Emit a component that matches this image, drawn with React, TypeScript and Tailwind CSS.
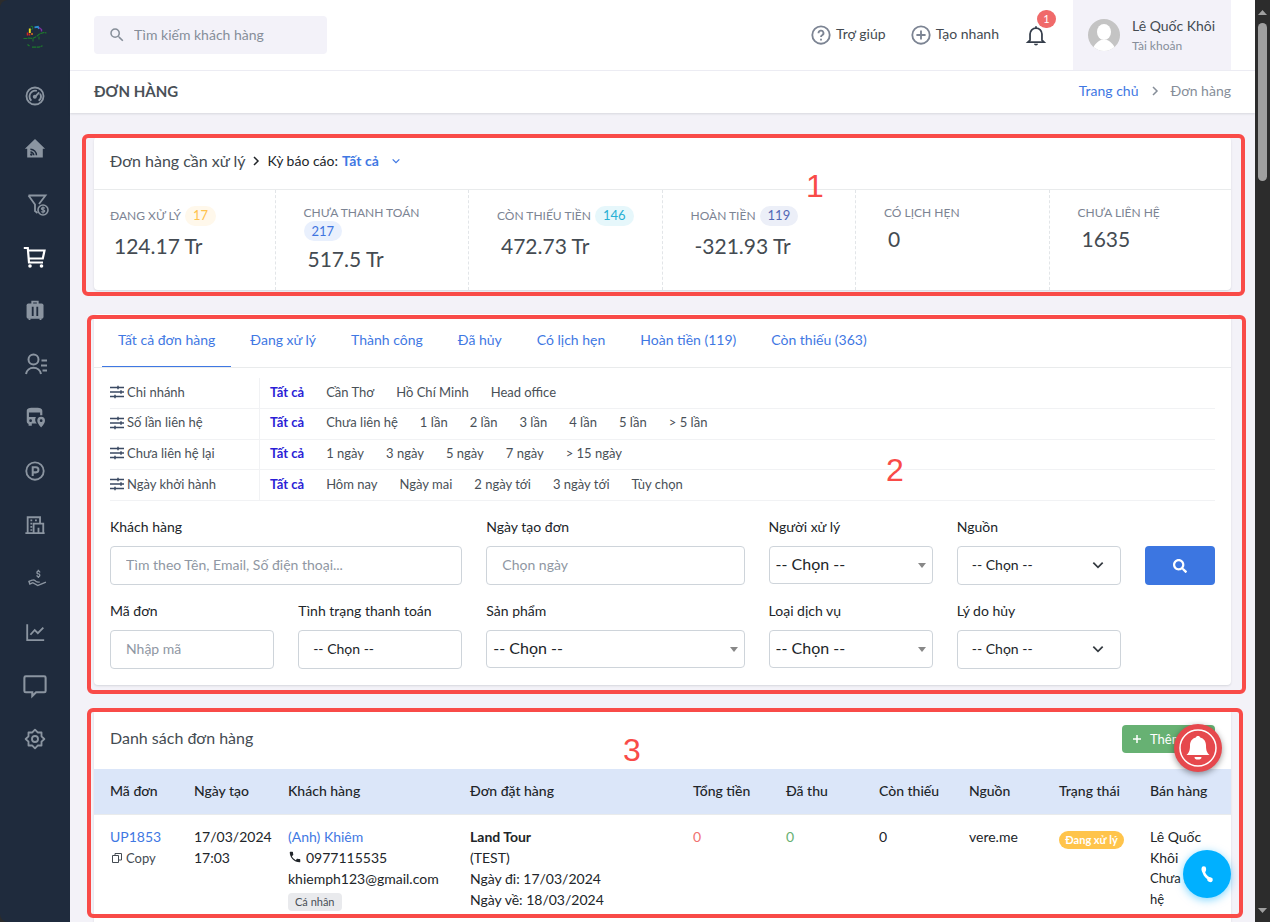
import type { ReactNode } from "react";
import { LiaHandHoldingUsdSolid } from "react-icons/lia";
import { MdSearch, MdPhone } from "react-icons/md";
import { FaSearch } from "react-icons/fa";

function Svg({ children, className = "size-5" }: { children: ReactNode; className?: string }) {
  return (
    <svg viewBox="0 0 24 24" className={className} fill="none" stroke="currentColor" strokeWidth="2" aria-hidden="true">
      {children}
    </svg>
  );
}

const navItems: { label: string; icon: ReactNode; active?: boolean }[] = [
  {
    label: "Tổng quan",
    icon: (
      <Svg className="size-[22px]">
        <circle cx="12" cy="12" r="9.300" />
        <path d="M8 17.200a6.200 6.200 0 0 1-2-5.200 6.200 6.200 0 0 1 8-5.600M17.600 9.400a6.200 6.200 0 0 1-1.600 7.800M12 13l4.600-5" />
        <circle cx="11.800" cy="12.800" r="2.200" fill="currentColor" stroke="none" />
      </Svg>
    ),
  },
  {
    label: "Bảng tin",
    icon: (
      <Svg className="size-[22px]">
        <path d="M12 1.200 1 11.800H3.500v9.600h17V11.800H23z" fill="currentColor" stroke="none" />
        <path d="M7 12.300a6.600 6.600 0 0 1 6.600 6.600M7 15.200a3.700 3.700 0 0 1 3.700 3.700" stroke="#1f2b3d" strokeWidth="1.600" />
        <circle cx="8" cy="18" r="1.300" fill="#1f2b3d" stroke="none" />
      </Svg>
    ),
  },
  {
    label: "Cơ hội",
    icon: (
      <Svg className="mt-1 ml-1.5 size-6">
        <path d="M2.500 2.500h17l-6.500 8.500M2.500 2.500 9 11.500V18l2.500 2" strokeWidth="1.800" />
        <circle cx="17" cy="17" r="5" strokeWidth="1.600" />
        <path d="M18.800 15.300c-.6-.8-3.400-1-3.400.4s3.400.9 3.400 2.400-2.900 1.300-3.600.4M17 13.500v7" strokeWidth="1.200" />
      </Svg>
    ),
  },
  {
    label: "Đơn hàng",
    active: true,
    icon: (
      <Svg className="size-6">
        <path d="M.8 3h4l1.200 14.500h14M5 5.500h16.500L19.800 13.500H5.800" strokeWidth="2.200" />
        <circle cx="7" cy="21" r="1.800" fill="currentColor" stroke="none" />
        <circle cx="18.500" cy="21" r="1.800" fill="currentColor" stroke="none" />
      </Svg>
    ),
  },
  {
    label: "Tour",
    icon: (
      <Svg className="size-[22px]">
        <rect x="2.800" y="5" width="18.500" height="16.500" rx="2" fill="currentColor" stroke="none" />
        <path d="M9 6V2.800h6V6M6 21v2M18 21v2" />
        <path d="M9.500 8.500v10M14.500 8.500v10" stroke="#1f2b3d" strokeWidth="2" />
      </Svg>
    ),
  },
  {
    label: "Khách hàng",
    icon: (
      <Svg className="ml-0.5 size-6">
        <circle cx="9.500" cy="7.500" r="5" />
        <path d="M2 22a7.600 7.600 0 0 1 15 0M17.500 8.500H23M17 13.500h6M18.500 18.500H23" />
      </Svg>
    ),
  },
  {
    label: "Điều hành",
    icon: (
      <Svg className="size-[22px]">
        <path
          fillRule="evenodd"
          d="M3 5.500C3 2.500 6 2 11.500 2S20 2.500 20 5.500V10h-2.400V7H5.400v5H13a6 6 0 0 0 1 7H8.500v2.500H5V19.500c-1.200-.6-2-1.500-2-3zM7.200 14.500a1.500 1.500 0 1 0 0 3 1.500 1.500 0 0 0 0-3z"
          fill="currentColor"
          stroke="none"
        />
        <path
          fillRule="evenodd"
          d="M18.700 11.800a4.200 4.200 0 0 0-4.200 4.200c0 3 4.200 7.400 4.200 7.400s4.200-4.400 4.200-7.400a4.200 4.200 0 0 0-4.200-4.200zm0 2.700a1.500 1.500 0 1 1 0 3 1.500 1.500 0 0 1 0-3z"
          fill="currentColor"
          stroke="none"
        />
      </Svg>
    ),
  },
  {
    label: "Bãi xe",
    icon: (
      <Svg className="size-[22px]">
        <circle cx="12" cy="12" r="9.500" />
        <path d="M9.500 17.500V8h3.500a2.700 2.700 0 0 1 0 5.500H9.500" strokeWidth="2.200" />
      </Svg>
    ),
  },
  {
    label: "Công ty",
    icon: (
      <Svg className="size-[22px]">
        <path d="M1.500 20.800h21M4 20.500V3.500h13.500V10M10.500 20.500V10.500H21v10M15.800 20.500V15" />
        <path d="M7 7h2M7 10.500h2M7 14h2M7 17.500h2M12 7h2" strokeWidth="1.800" />
      </Svg>
    ),
  },
  { label: "Tài chính", icon: <LiaHandHoldingUsdSolid className="ml-1 size-[22px]" /> },
  {
    label: "Báo cáo",
    icon: (
      <Svg className="size-[22px]">
        <path d="M3.500 3.500v17.300h18.500M7 15l4.700-5.200 3.400 3.400 6-6" />
      </Svg>
    ),
  },
  {
    label: "Tin nhắn",
    icon: (
      <Svg className="size-[26px]">
        <path d="M3.500 3h17A1.300 1.300 0 0 1 21.800 4.300v12.200a1.300 1.300 0 0 1-1.300 1.300H13l-3.500 3.500v-3.500h-6a1.300 1.300 0 0 1-1.300-1.300V4.300A1.300 1.300 0 0 1 3.500 3z" strokeWidth="1.900" />
      </Svg>
    ),
  },
  {
    label: "Cài đặt",
    icon: (
      <Svg className="size-[22px]">
        <path d="m12 1.800 2.900 3.100h4.200v4.200L22.200 12l-3.100 2.900v4.200h-4.200L12 22.200l-2.900-3.100H4.900v-4.200L1.800 12l3.100-2.900V4.900h4.200z" strokeLinejoin="round" />
        <circle cx="12" cy="12" r="3.300" />
      </Svg>
    ),
  },
];

function Logo() {
  return (
    <svg viewBox="0 0 24 24" className="size-6" fill="none" aria-label="Logo">
      <path d="M.5 14.500h3l2-.5 4 .5 4-2 3-2.500 4-1.500 3 .5M4.500 20.500l2 1.500M9 23.200h7l3.500-1.500" stroke="#1d7a2c" strokeWidth="1.200" strokeDasharray="4 .6" />
      <path d="M10 15v2.500M16 12.500v3M7.500 3 9 2l1 2-1.500 2" stroke="#1d7a2c" />
      <path d="M4.500 8.500v3M6.500 9.500v2" stroke="#d02525" strokeWidth="1.500" />
      <path d="M6.800 4.500v4.500" stroke="#e8e021" strokeWidth="1.900" />
      <path d="M8 10h2" stroke="#e0711c" strokeWidth="1.500" />
      <path d="m11.500 3.300 3.500-.5 1 2" stroke="#2b8fd0" strokeWidth="1.700" />
      <path d="m16 3.500 2.500 2v2" stroke="#7b2fa0" strokeWidth="1.400" />
    </svg>
  );
}

function Chevron({ className }: { className: string }) {
  return (
    <svg viewBox="0 0 12 12" className={className} fill="none" stroke="currentColor" strokeWidth="1.500" aria-hidden="true">
      <path d="m2 4 4 4 4-4" />
    </svg>
  );
}

function Marker({ className, numberClass, n }: { className: string; numberClass: string; n: number }) {
  return (
    <div className={`pointer-events-none absolute z-10 rounded-md border-4 border-[#f94b48] ${className}`}>
      <span className={`absolute font-[Liberation_Sans] text-[32px] leading-8 text-[#f94b48] ${numberClass}`}>{n}</span>
    </div>
  );
}

const stats = [
  { label: "ĐANG XỬ LÝ", count: 17, badge: "bg-[#fff8eb] text-[#ffc24c]", value: "124.17 Tr" },
  { label: "CHƯA THANH TOÁN", count: 217, badge: "bg-[#e9f0fd] text-[#3f74e0]", value: "517.5 Tr", stacked: true },
  { label: "CÒN THIẾU TIỀN", count: 146, badge: "bg-[#e6f7fb] text-[#27b0d4]", value: "472.73 Tr" },
  { label: "HOÀN TIỀN", count: 119, badge: "bg-[#eceff8] text-[#5268b5]", value: "-321.93 Tr" },
  { label: "CÓ LỊCH HẸN", value: "0" },
  { label: "CHƯA LIÊN HỆ", value: "1635" },
];

const tabs = ["Tất cả đơn hàng", "Đang xử lý", "Thành công", "Đã hủy", "Có lịch hẹn", "Hoàn tiền (119)", "Còn thiếu (363)"];

const filters = [
  { label: "Chi nhánh", options: ["Cần Thơ", "Hồ Chí Minh", "Head office"] },
  { label: "Số lần liên hệ", options: ["Chưa liên hệ", "1 lần", "2 lần", "3 lần", "4 lần", "5 lần", "> 5 lần"] },
  { label: "Chưa liên hệ lại", options: ["1 ngày", "3 ngày", "5 ngày", "7 ngày", "> 15 ngày"] },
  { label: "Ngày khởi hành", options: ["Hôm nay", "Ngày mai", "2 ngày tới", "3 ngày tới", "Tùy chọn"] },
];

function TextField({ id, label, placeholder, className }: { id: string; label: string; placeholder: string; className: string }) {
  return (
    <div className={className}>
      <label htmlFor={id} className="mb-2.5 block leading-[19px] text-[#212529]">{label}</label>
      <input
        id={id}
        type="text"
        placeholder={placeholder}
        className="h-[39px] w-full rounded border border-[#ced4da] bg-white px-[15px] pb-0.5 outline-none placeholder:text-[#8f97a3]"
      />
    </div>
  );
}

function SelectField({ id, label, kind, className }: { id: string; label: string; kind: "plain" | "chevron" | "caret"; className: string }) {
  const caret = kind === "caret";
  return (
    <div className={className}>
      <label htmlFor={id} className="mb-2.5 block leading-[19px] text-[#212529]">{label}</label>
      <div className="relative">
        <select
          id={id}
          className={
            caret
              ? "h-[38px] w-full appearance-none rounded border border-[#ced4da] bg-white px-1.5 pb-0.5 text-base text-[#212529]"
              : "h-[39px] w-full appearance-none rounded border border-[#ced4da] bg-white px-3.5 pb-0.5 text-[#212529]"
          }
        >
          <option>-- Chọn --</option>
        </select>
        {kind === "chevron" && <Chevron className="pointer-events-none absolute top-3 right-4 size-[14px] text-[#343a40]" />}
        {caret && (
          <svg viewBox="0 0 8 5" className="pointer-events-none absolute top-[17px] right-[7px] h-[5px] w-2 fill-[#888]" aria-hidden="true">
            <path d="M0 0h8L4 5z" />
          </svg>
        )}
      </div>
    </div>
  );
}

export default function App() {
  return (
    <div className="flex h-screen overflow-hidden bg-[#2c2c2c] font-[Lato,'Noto_Sans',sans-serif] text-sm text-[#212529]">
      <aside className="flex w-[70px] shrink-0 flex-col rounded-l-lg bg-[#1f2b3d]">
        <a href="#" className="flex h-[69px] items-center justify-center pt-0.5">
          <Logo />
        </a>
        <nav className="flex h-[697px] flex-col">
          {navItems.map((item) => (
            <a
              key={item.label}
              href="#"
              aria-label={item.label}
              className={item.active ? "flex flex-1 items-center justify-center text-white" : "flex flex-1 items-center justify-center text-[#8b95a1]"}
            >
              {item.icon}
            </a>
          ))}
        </nav>
      </aside>

      <div className="flex min-w-0 flex-1 flex-col bg-[#f3f2f8]">
        <header className="flex h-[71px] shrink-0 items-center border-b border-[#eeeef5] bg-white px-6">
          <label className="flex h-[38px] w-[233px] items-center gap-2 rounded bg-[#f3f2f9] px-3.5 text-[#868e99]">
            <MdSearch className="size-[18px] shrink-0" />
            <input type="text" aria-label="Tìm kiếm" placeholder="Tìm kiếm khách hàng" className="w-full bg-transparent outline-none placeholder:text-[#868e99]" />
          </label>
          <div className="ml-auto flex h-full items-center">
            <button type="button" className="flex items-center gap-1 text-[#444b52]">
              <Svg className="size-[22px] text-[#7c8493]">
                <circle cx="12" cy="12" r="9.500" />
                <path d="M9.300 10a2.700 2.700 0 1 1 3.900 2.300c-.9.500-1.200 1-1.200 2" />
                <path d="M12 16v2" />
              </Svg>
              <span className="pb-0.5">Trợ giúp</span>
            </button>
            <button type="button" className="ml-6 flex items-center gap-1 text-[#444b52]">
              <Svg className="size-[22px] text-[#7c8493]">
                <circle cx="12" cy="12" r="9.500" />
                <path d="M12 7v10M7 12h10" />
              </Svg>
              <span className="pb-0.5">Tạo nhanh</span>
            </button>
            <button type="button" aria-label="Thông báo" className="relative mr-[26px] ml-[26px] text-[#343d4a]">
              <Svg className="size-[22px]">
                <path d="M5.500 17.500V11a6.500 6.500 0 0 1 13 0v6.500l2.300 2.200H3.200zM12 4.500V2.500" strokeWidth="1.900" />
                <path d="M9.800 21.500h4.400a2.200 2 0 0 1-4.400 0z" fill="currentColor" stroke="none" />
              </Svg>
              <span className="absolute -top-[14px] left-3 flex h-[18px] w-[19px] items-center justify-center rounded-full bg-[#f06a6a] text-[11px] text-white">1</span>
            </button>
            <button type="button" className="flex h-full items-center gap-3 bg-[#f3f2f9] pr-3.5 pl-[15px] text-left">
              <svg viewBox="0 0 32 32" className="size-8 rounded-full" aria-hidden="true">
                <rect width="32" height="32" fill="#c4c4c4" />
                <ellipse cx="16" cy="13" rx="7" ry="8" fill="#fff" />
                <path d="M4 32c2-7 6-9.500 9-11h6c3 1.500 7 4 9 11z" fill="#fff" />
              </svg>
              <span className="w-[85px] pt-0.5">
                <span className="block leading-5 whitespace-nowrap text-[#444b52]">Lê Quốc Khôi</span>
                <span className="block text-xs leading-5 text-[#868e99]">Tài khoản</span>
              </span>
            </button>
          </div>
        </header>

        <div className="z-[1] flex h-[42px] shrink-0 items-center justify-between bg-white px-6 shadow-[0_1px_2px_rgba(56,65,74,0.15)]">
          <h1 className="text-[15px] font-bold text-[#495057]">ĐƠN HÀNG</h1>
          <nav className="flex items-center pb-0.5 text-[#868e99]">
            <a href="#" className="text-[#3f78e3]">Trang chủ</a>
            <Chevron className="mx-2.5 size-3 -rotate-90" />
            <span>Đơn hàng</span>
          </nav>
        </div>

        <main className="flex flex-1 flex-col gap-6 px-6 pt-6">
          <section className="relative rounded bg-white shadow-[0_1px_2px_rgba(56,65,74,0.15)]">
            <div className="flex h-[53px] items-center border-b border-[#e9ebec] px-4 pb-1">
              <h2 className="text-base text-[#444b52]">Đơn hàng cần xử lý</h2>
              <Chevron className="mx-1 size-3 -rotate-90" />
              <span className="ml-0.5">Kỳ báo cáo:</span>
              <button type="button" className="ml-1 flex items-center font-bold text-[#3f78e3]">
                Tất cả
                <Chevron className="ml-3 size-[10px]" />
              </button>
            </div>
            <div className="overflow-hidden">
              <div className="-mx-3 grid h-[100px] grid-cols-6">
                {stats.map((s) => (
                  <div key={s.label} className="border-r border-dashed border-[#e2e5e8] px-7 pt-[13px] last:border-r-0">
                    <div className={s.count && !s.stacked ? "flex h-[25px] items-center" : "leading-[18px]"}>
                      <span className="text-xs whitespace-nowrap text-[#7c8493]">{s.label}</span>
                      {s.count && (
                        <span className={`flex h-5 w-fit items-center rounded-full px-2 text-[13px] ${s.stacked ? "" : "ml-1"} ${s.badge}`}>{s.count}</span>
                      )}
                    </div>
                    <p className="px-1 text-[21px] leading-9 whitespace-nowrap text-[#444b52]">{s.value}</p>
                  </div>
                ))}
              </div>
            </div>
            <Marker className="-top-[3px] -right-[14px] -bottom-[6px] -left-3" numberClass="top-8 left-[720px]" n={1} />
          </section>

          <section className="relative rounded bg-white shadow-[0_1px_2px_rgba(56,65,74,0.15)]">
            <div className="flex h-[54px] gap-[3px] border-b border-[#e9ebec] px-2">
              {tabs.map((t, i) => (
                <button
                  key={t}
                  type="button"
                  className={
                    i === 0
                      ? "border-b border-[#3f78e3] px-4 text-[#3f78e3]"
                      : "border-b border-transparent px-4 text-[#3f78e3]"
                  }
                >
                  {t}
                </button>
              ))}
            </div>
            <div className="px-4 pt-[10px] pb-4">
              <div className="grid h-[123px] grid-rows-4">
                {filters.map((f) => (
                  <div key={f.label} className="flex items-stretch border-b border-[#f1f2f4] text-[13px] text-[#495057]">
                    <div className="flex w-[150px] items-center gap-[3px] border-r border-[#f1f2f4] pb-0.5">
                      <svg viewBox="0 0 14 14" className="size-[14px] shrink-0" fill="none" stroke="#3b4a63" strokeWidth="1.500" aria-hidden="true">
                        <path d="M0 2.500h14M0 7h14M0 11.500h14M8 .8v3.400M11 5.300v3.400M5 9.800v3.400" />
                      </svg>
                      {f.label}
                    </div>
                    <div className="flex items-center gap-[22px] pb-0.5 pl-[10px]">
                      <button type="button" className="font-bold text-[#2b1ed6]">Tất cả</button>
                      {f.options.map((o) => (
                        <button key={o} type="button" className="whitespace-nowrap">{o}</button>
                      ))}
                    </div>
                  </div>
                ))}
              </div>
              <form className="mt-4 grid grid-cols-12 gap-x-6 gap-y-4" onSubmit={(e) => e.preventDefault()}>
                <TextField id="customer" label="Khách hàng" placeholder="Tìm theo Tên, Email, Số điện thoại..." className="col-span-4" />
                <TextField id="created" label="Ngày tạo đơn" placeholder="Chọn ngày" className="col-span-3" />
                <SelectField id="handler" label="Người xử lý" kind="caret" className="col-span-2" />
                <SelectField id="source" label="Nguồn" kind="chevron" className="col-span-2" />
                <button type="submit" aria-label="Tìm" className="flex h-[39px] items-center justify-center self-end rounded bg-[#3c76e1] text-white">
                  <FaSearch className="size-[14px]" />
                </button>
                <TextField id="code" label="Mã đơn" placeholder="Nhập mã" className="col-span-2" />
                <SelectField id="payment" label="Tình trạng thanh toán" kind="plain" className="col-span-2" />
                <SelectField id="product" label="Sản phẩm" kind="caret" className="col-span-3" />
                <SelectField id="service" label="Loại dịch vụ" kind="caret" className="col-span-2" />
                <SelectField id="reason" label="Lý do hủy" kind="chevron" className="col-span-2" />
              </form>
            </div>
            <Marker className="top-px -right-[15px] -bottom-[9px] -left-[7px]" numberClass="top-[135px] left-[795px]" n={2} />
          </section>

          <section className="relative rounded bg-white shadow-[0_1px_2px_rgba(56,65,74,0.15)]">
            <div className="flex h-[60px] items-center justify-between px-4">
              <h2 className="pb-0.5 text-base text-[#444b52]">Danh sách đơn hàng</h2>
              <button type="button" className="flex h-7 w-[93px] items-center gap-2 rounded-sm bg-[#67b173] pl-2.5 text-[13px] whitespace-nowrap text-white">
                <svg viewBox="0 0 10 10" className="size-[10px]" stroke="currentColor" strokeWidth="1.500" aria-hidden="true">
                  <path d="M5 1v8M1 5h8" />
                </svg>
                Thêm mới
              </button>
            </div>
            <table className="w-full table-fixed text-left">
              <thead className="bg-[#dbe6f9]">
                <tr className="h-[45px] border-b border-[#e9ebec] whitespace-nowrap [&>th]:pl-4 [&>th]:font-medium">
                  <th className="w-[84px]">Mã đơn</th>
                  <th className="w-[94px]">Ngày tạo</th>
                  <th className="w-[182px]">Khách hàng</th>
                  <th>Đơn đặt hàng</th>
                  <th className="w-[93px]">Tổng tiền</th>
                  <th className="w-[93px]">Đã thu</th>
                  <th className="w-[90px]">Còn thiếu</th>
                  <th className="w-[90px]">Nguồn</th>
                  <th className="w-[91px]">Trạng thái</th>
                  <th className="w-[97px]">Bán hàng</th>
                </tr>
              </thead>
              <tbody>
                <tr className="align-top leading-[21px] [&>td]:pt-[11px] [&>td]:pb-8 [&>td]:pl-4">
                  <td>
                    <a href="#" className="text-[#3f78e3]">UP1853</a>
                    <button type="button" className="flex items-center gap-1 pt-px pl-0.5 text-[13px] text-[#444b52]">
                      <svg viewBox="0 0 10 10" className="size-[10px]" fill="none" stroke="currentColor" aria-hidden="true">
                        <path d="M.500 2.500h6v7h-6zM3 2.500v-2h6.500v6.500h-3" />
                      </svg>
                      Copy
                    </button>
                  </td>
                  <td className="whitespace-nowrap">17/03/2024<br />17:03</td>
                  <td className="whitespace-nowrap">
                    <a href="#" className="text-[#3f78e3]">(Anh) Khiêm</a>
                    <div className="flex items-center gap-1"><MdPhone className="size-[14px]" />0977115535</div>
                    <div>khiemph123@gmail.com</div>
                    <span className="mt-1 flex h-[18px] w-fit items-center rounded bg-[#e9eaed] px-[7px] text-[11px] text-[#495057]">Cá nhân</span>
                  </td>
                  <td>
                    <strong>Land Tour</strong>
                    <div>(TEST)</div>
                    <div>Ngày đi: 17/03/2024</div>
                    <div>Ngày về: 18/03/2024</div>
                  </td>
                  <td className="text-[#f17171]">0</td>
                  <td className="text-[#67b173]">0</td>
                  <td>0</td>
                  <td>vere.me</td>
                  <td>
                    <span className="mt-[5px] flex h-[18px] w-[65px] items-center justify-center rounded-full bg-[#ffc44b] text-[11px] font-bold whitespace-nowrap text-white">Đang xử lý</span>
                  </td>
                  <td className="pr-4">
                    Lê Quốc Khôi
                    <div className="text-[13px]">Chưa liên hệ</div>
                  </td>
                </tr>
              </tbody>
            </table>
            <Marker className="-top-px -right-3 -left-[7px] h-[210px]" numberClass="top-[22px] left-[532px]" n={3} />
          </section>
        </main>
      </div>

      <div className="flex w-[15px] shrink-0 flex-col items-center pt-[10px] pb-[9px]" aria-hidden="true">
        <svg viewBox="0 0 9 5" className="h-[5px] w-[9px] fill-[#9f9f9f]"><path d="M0 5h9L4.500 0z" /></svg>
        <div className="mt-2 h-[158px] w-[9px] rounded-full bg-[#9f9f9f]" />
        <svg viewBox="0 0 9 5" className="mt-auto h-[5px] w-[9px] fill-[#9f9f9f]"><path d="M0 0h9L4.500 5z" /></svg>
      </div>

      <button type="button" aria-label="Nhắc việc" className="fixed right-12 bottom-[150px] z-20 flex size-12 items-center justify-center rounded-full bg-[#e6484d] shadow-[0_2px_6px_rgba(0,0,0,0.4)]">
        <svg viewBox="0 0 38 38" className="size-[38px]" fill="#fff" aria-hidden="true">
          <circle cx="19" cy="19" r="18" fill="none" stroke="#fff" strokeWidth="1.500" />
          <path d="M19 7c1.300 0 2 .7 2.200 1.600 3.800 1 5.800 4 5.800 7.900 0 5.500 1.300 7.500 3.500 9.500H7.500c2.200-2 3.500-4 3.500-9.500 0-3.900 2-6.900 5.800-7.900C17 7.700 17.700 7 19 7zM15.500 28h7a3.500 2.600 0 0 1-7 0z" />
        </svg>
      </button>
      <button type="button" aria-label="Gọi điện" className="fixed right-[39px] bottom-6 z-20 flex size-12 items-center justify-center rounded-full bg-[#00b0ff] shadow-[0_2px_8px_rgba(0,176,255,0.5)]">
        <svg viewBox="0 0 16 18" className="h-[18px] w-4" fill="none" stroke="#fff" strokeLinecap="round" aria-hidden="true">
          <path d="M4.500 4C4 8 7 12 10.500 14" strokeWidth="3" />
          <path d="M4.800 3.500v1.500M10.500 14.500l1 .3" strokeWidth="4.600" />
        </svg>
      </button>
    </div>
  );
}
